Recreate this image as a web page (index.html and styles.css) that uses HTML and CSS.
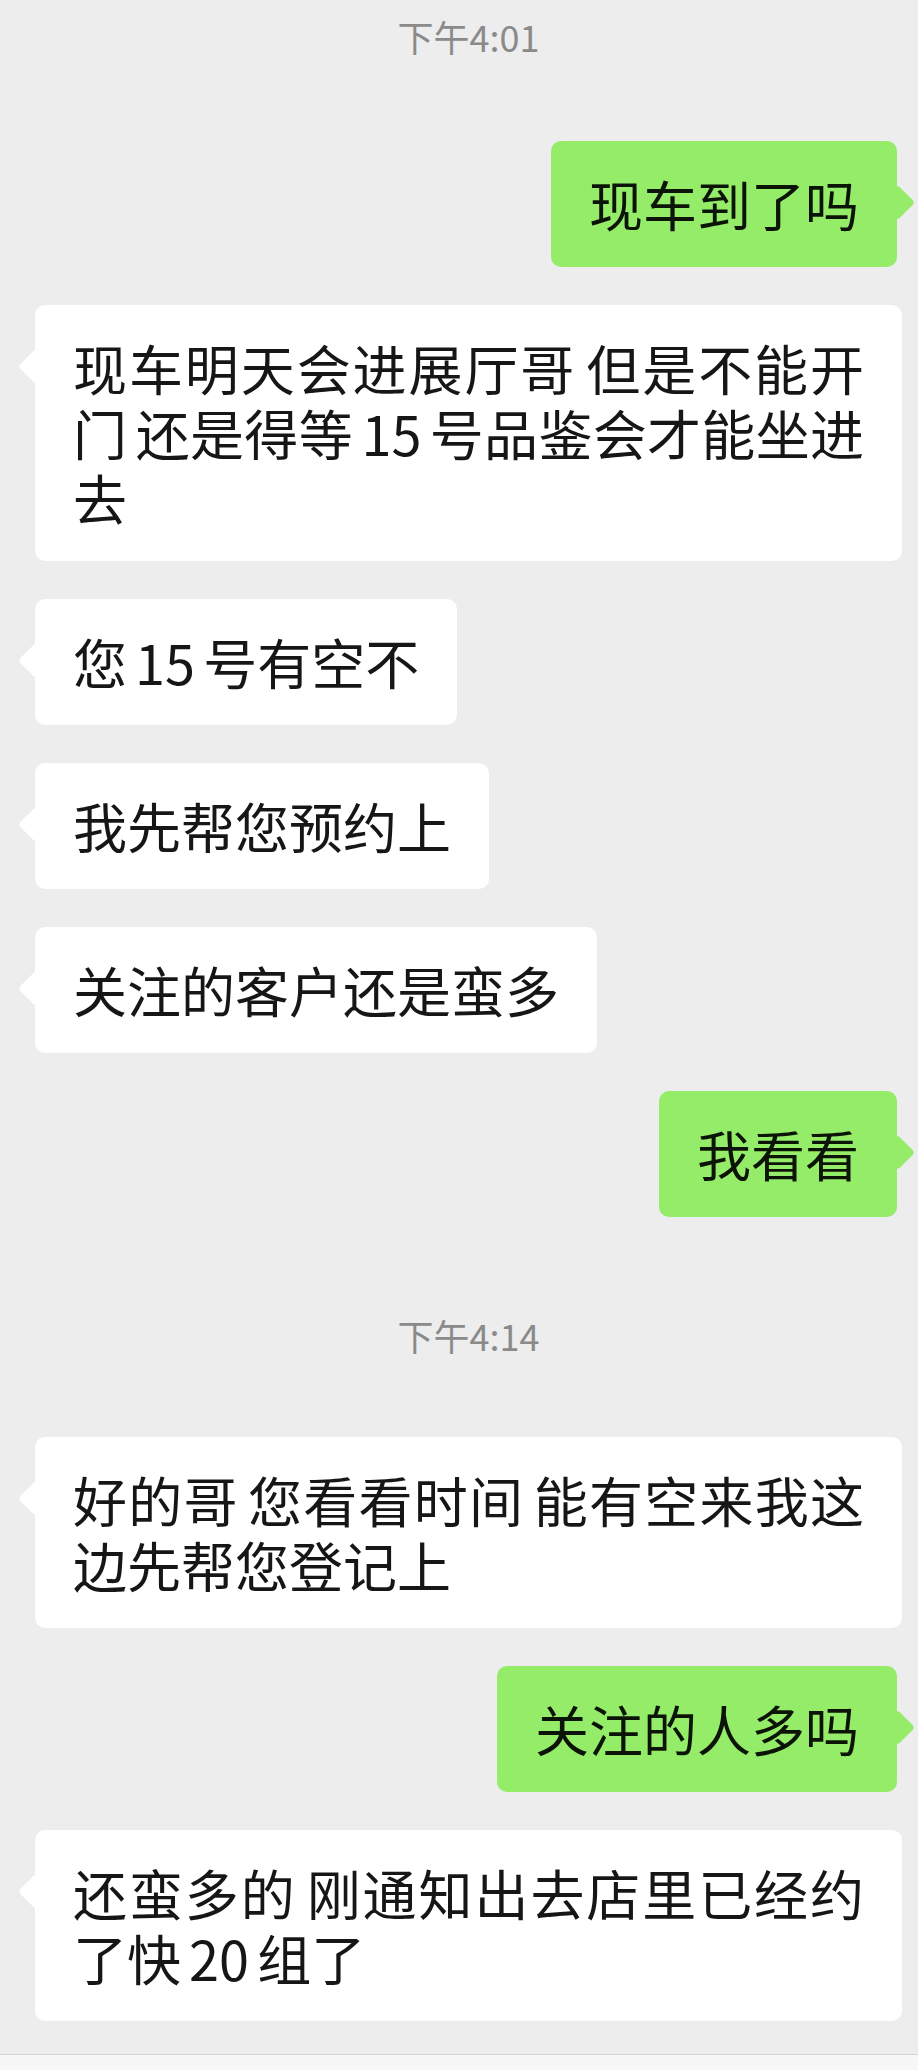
FILE: index.html
```html
<!DOCTYPE html>
<html lang="zh-CN">
<head>
<meta charset="utf-8">
<title>聊天</title>
<link rel="stylesheet" href="styles.css">
</head>
<body>
<div class="screen">
  <div class="chat">
    <div class="time">下午4:01</div>
    <div class="msg out"><div class="bubble">现车到了吗</div></div>
    <div class="msg in"><div class="bubble">现车明天会进展厅哥 但是不能开门 还是得等 15 号品鉴会才能坐进去</div></div>
    <div class="msg in"><div class="bubble">您 15 号有空不</div></div>
    <div class="msg in"><div class="bubble">我先帮您预约上</div></div>
    <div class="msg in"><div class="bubble">关注的客户还是蛮多</div></div>
    <div class="msg out"><div class="bubble">我看看</div></div>
    <div class="time later">下午4:14</div>
    <div class="msg in"><div class="bubble">好的哥 您看看时间 能有空来我这边先帮您登记上</div></div>
    <div class="msg out"><div class="bubble">关注的人多吗</div></div>
    <div class="msg in"><div class="bubble">还蛮多的 刚通知出去店里已经约了快 20 组了</div></div>
  </div>
  <div class="inputbar"></div>
</div>
</body>
</html>
```

FILE: styles.css
```css
html, body {
  margin: 0;
  padding: 0;
  background: #ededed;
}

body {
  font-family: "Noto Sans CJK SC", "Noto Sans", sans-serif;
}

.screen {
  height: 2070px;
  display: flex;
  flex-direction: column;
  overflow: hidden;
}

.chat {
  flex: 1;
  min-height: 0;
  display: flex;
  flex-direction: column;
  gap: 38px;
  padding: 12px 16px 0 35px;
}

.time {
  text-align: center;
  font-size: 36px;
  line-height: 48px;
  color: #8a8a8a;
  margin-bottom: 43px;
}

.time.later {
  margin-top: 56px;
  margin-bottom: 40px;
}

.msg {
  display: flex;
}

.msg.out {
  justify-content: flex-end;
  padding-right: 5px;
}

.bubble {
  position: relative;
  padding: 30px 38px 31px;
  font-size: 54px;
  line-height: 65px;
  border-radius: 10px;
  color: #161616;
  word-spacing: -4px;
  text-align: justify;
  text-justify: inter-word;
}

.in .bubble {
  background: #ffffff;
}

.out .bubble {
  background: #95ec69;
  color: #0b1407;
}

.bubble::before {
  content: "";
  position: absolute;
  top: 49px;
  width: 25px;
  height: 25px;
  background: inherit;
  border-radius: 4px;
  transform: rotate(45deg);
}

.in .bubble::before {
  left: -12.5px;
}

.out .bubble::before {
  right: -12.5px;
}

.inputbar {
  height: 15px;
  flex: none;
  border-top: 1px solid #d4d4d4;
  background: #f7f7f7;
}
```
